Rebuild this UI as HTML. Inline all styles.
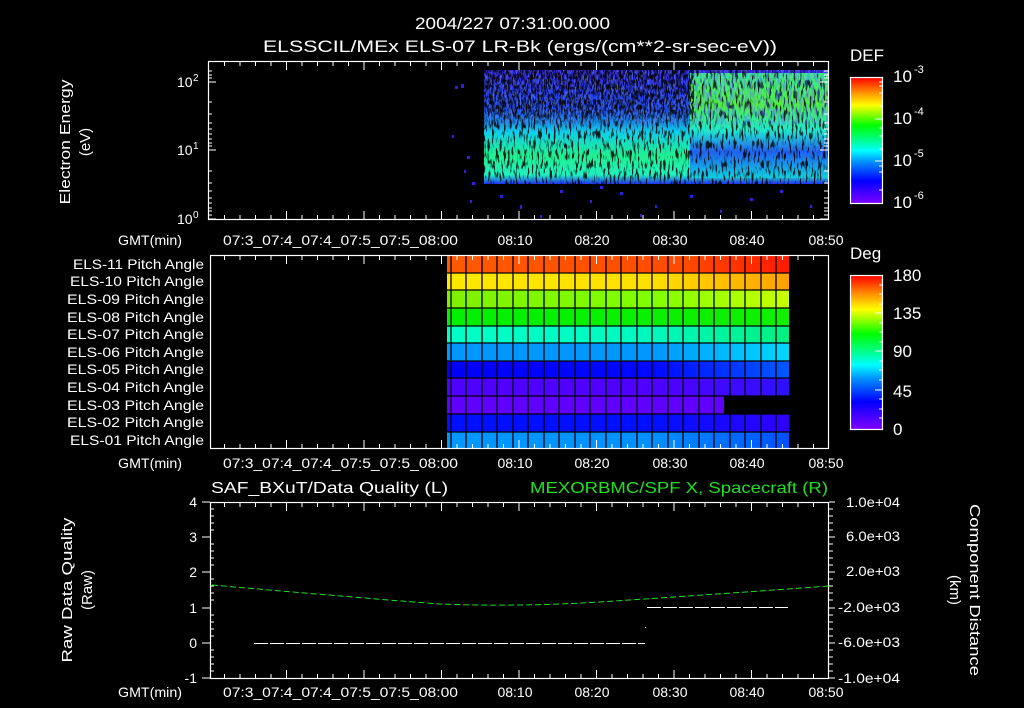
<!DOCTYPE html>
<html><head><meta charset="utf-8"><style>
html,body{margin:0;padding:0;background:#000;}
svg{display:block}
text{font-family:"Liberation Sans",sans-serif;fill:#fff;}
</style></head><body>
<svg width="1024" height="708" viewBox="0 0 1024 708" xmlns="http://www.w3.org/2000/svg">
<defs>
<filter id="spk" x="0" y="0" width="100%" height="100%">
<feTurbulence type="fractalNoise" baseFrequency="0.5 0.1" numOctaves="2" seed="3"/>
<feColorMatrix type="matrix" values="0 0 0 0 0  0 0 0 0 0  0 0 0 0 0  0 0 0 -8 3.7"/>
</filter>
<filter id="spk3" x="0" y="0" width="100%" height="100%">
<feTurbulence type="fractalNoise" baseFrequency="0.6 0.2" numOctaves="2" seed="11"/>
<feColorMatrix type="matrix" values="0 0 0 0 0  0 0 0 0 0  0 0 0 0 0  0 0 0 -8 4.3"/>
</filter>
<filter id="spk2" x="0" y="0" width="100%" height="100%">
<feTurbulence type="fractalNoise" baseFrequency="0.5 0.12" numOctaves="2" seed="7"/>
<feColorMatrix type="matrix" values="0 0 0 0 0.1  0 0 0 0 0.2  0 0 0 0 1  0 0 0 -6 3.2"/>
</filter>
<linearGradient id="fadeY" x1="0" y1="0" x2="0" y2="1"><stop offset="0" stop-color="#fff"/><stop offset="0.7" stop-color="#fff"/><stop offset="1" stop-color="#fff" stop-opacity="0"/></linearGradient>
<mask id="m3"><rect x="484" y="70" width="210" height="58" fill="url(#fadeY)"/></mask>
<linearGradient id="defbar" x1="0" y1="1" x2="0" y2="0">
<stop offset="0" stop-color="#8000ff"/><stop offset="0.18" stop-color="#0000ff"/><stop offset="0.33" stop-color="#0090ff"/><stop offset="0.42" stop-color="#00ffff"/><stop offset="0.5" stop-color="#00ff90"/><stop offset="0.62" stop-color="#00ff00"/><stop offset="0.78" stop-color="#ffff00"/><stop offset="0.88" stop-color="#ff9000"/><stop offset="1" stop-color="#ff0000"/>
</linearGradient>
<linearGradient id="g11" x1="0" x2="1"><stop offset="0" stop-color="#ff5a00"/><stop offset="0.7" stop-color="#ff4a00"/><stop offset="1" stop-color="#ff1a00"/></linearGradient>
<linearGradient id="g10" x1="0" x2="1"><stop offset="0" stop-color="#ffe800"/><stop offset="0.6" stop-color="#ffe000"/><stop offset="1" stop-color="#ffa000"/></linearGradient>
<linearGradient id="g09" x1="0" x2="1"><stop offset="0" stop-color="#80f000"/><stop offset="0.6" stop-color="#80ff00"/><stop offset="1" stop-color="#c8ff00"/></linearGradient>
<linearGradient id="g08" x1="0" x2="1"><stop offset="0" stop-color="#00f000"/><stop offset="1" stop-color="#10f000"/></linearGradient>
<linearGradient id="g07" x1="0" x2="1"><stop offset="0" stop-color="#00ffc8"/><stop offset="0.6" stop-color="#00f8c0"/><stop offset="1" stop-color="#00f080"/></linearGradient>
<linearGradient id="g06" x1="0" x2="1"><stop offset="0" stop-color="#0098ff"/><stop offset="0.6" stop-color="#0098ff"/><stop offset="1" stop-color="#00d8ff"/></linearGradient>
<linearGradient id="g05" x1="0" x2="1"><stop offset="0" stop-color="#0000f8"/><stop offset="0.6" stop-color="#0008ff"/><stop offset="1" stop-color="#0058ff"/></linearGradient>
<linearGradient id="g04" x1="0" x2="1"><stop offset="0" stop-color="#5000ff"/><stop offset="0.6" stop-color="#5000ff"/><stop offset="1" stop-color="#3010ff"/></linearGradient>
<linearGradient id="g02" x1="0" x2="1"><stop offset="0" stop-color="#0010ff"/><stop offset="0.6" stop-color="#0010ff"/><stop offset="1" stop-color="#3000ff"/></linearGradient>
<linearGradient id="g01" x1="0" x2="1"><stop offset="0" stop-color="#0098ff"/><stop offset="0.6" stop-color="#0090ff"/><stop offset="1" stop-color="#0050ff"/></linearGradient>
<linearGradient id="spV" x1="0" y1="0" x2="0" y2="1">
<stop offset="0" stop-color="#3020d8"/><stop offset="0.35" stop-color="#2050f0"/><stop offset="0.55" stop-color="#10d0e8"/><stop offset="0.75" stop-color="#20f090"/><stop offset="0.92" stop-color="#20f0c0"/><stop offset="1" stop-color="#2030f0"/>
</linearGradient>
<linearGradient id="spR" x1="0" y1="0" x2="0" y2="1">
<stop offset="0" stop-color="#40e890"/><stop offset="0.3" stop-color="#50f040"/><stop offset="0.55" stop-color="#20e8d0"/><stop offset="0.75" stop-color="#2060f0"/><stop offset="1" stop-color="#10d0e0"/>
</linearGradient>
</defs>

<!-- titles -->
<text x="415" y="29" font-size="17" textLength="195" lengthAdjust="spacingAndGlyphs">2004/227 07:31:00.000</text>
<text x="263" y="52" font-size="17" textLength="514" lengthAdjust="spacingAndGlyphs">ELSSCIL/MEx ELS-07 LR-Bk  (ergs/(cm**2-sr-sec-eV))</text>
<text x="850" y="61" font-size="17">DEF</text>

<!-- top spectrogram -->
<g>
<rect x="484" y="70" width="344" height="114" fill="url(#spV)"/>
<rect x="690" y="73" width="138" height="105" fill="url(#spR)"/>
<rect x="484" y="70" width="344" height="114" fill="#000" filter="url(#spk)" opacity="0.85"/>
<rect x="484" y="70" width="344" height="55" filter="url(#spk2)" opacity="0.5"/>
<g mask="url(#m3)"><rect x="484" y="70" width="210" height="58" fill="#000" filter="url(#spk3)" opacity="0.8"/></g>
<g fill="#3020e0">
<rect x="455" y="86" width="3" height="3"/><rect x="461" y="84" width="3" height="4"/><rect x="452" y="135" width="2" height="3"/>
<rect x="467" y="156" width="3" height="3"/><rect x="464" y="170" width="2" height="3"/><rect x="472" y="182" width="3" height="3"/>
<rect x="470" y="200" width="2" height="3"/><rect x="500" y="195" width="3" height="3"/><rect x="520" y="205" width="2" height="4"/>
<rect x="560" y="190" width="3" height="3"/><rect x="590" y="200" width="2" height="3"/><rect x="620" y="192" width="3" height="3"/>
<rect x="655" y="205" width="2" height="3"/><rect x="690" y="195" width="3" height="3"/><rect x="720" y="210" width="2" height="3"/>
<rect x="750" y="198" width="3" height="3"/><rect x="780" y="190" width="3" height="3"/><rect x="810" y="205" width="2" height="3"/>
<rect x="540" y="215" width="2" height="3"/><rect x="640" y="214" width="2" height="3"/><rect x="600" y="186" width="3" height="3"/>
</g>
</g>
<!-- top panel frame -->
<rect x="208.5" y="61.5" width="620" height="158" fill="none" stroke="#fff" stroke-width="1.2"/>
<g stroke="#fff" stroke-width="1">
<path d="M208 82h8M208 150h8M208 219h8M828 82h-8M828 150h-8M828 219h-8"/>
<path d="M208 71h4M208 75h4M208 78h4M208 102h4M208 114h4M208 123h4M208 129h4M208 134h4M208 139h4M208 143h4M208 146h4M208 171h4M208 183h4M208 191h4M208 198h4M208 203h4M208 208h4M208 211h4M208 215h4"/>
<path d="M828 71h-4M828 75h-4M828 78h-4M828 102h-4M828 114h-4M828 123h-4M828 129h-4M828 134h-4M828 139h-4M828 143h-4M828 146h-4M828 171h-4M828 183h-4M828 191h-4M828 198h-4M828 203h-4M828 208h-4M828 211h-4M828 215h-4"/>
</g>
<text font-size="15" text-anchor="middle" textLength="125" lengthAdjust="spacingAndGlyphs" transform="translate(70,142) rotate(-90)">Electron Energy</text>
<text font-size="15" text-anchor="middle" transform="translate(90,142) rotate(-90)">(eV)</text>
<text x="177" y="87" font-size="14">10</text><text x="193" y="81" font-size="10">2</text>
<text x="177" y="155" font-size="14">10</text><text x="193" y="149" font-size="10">1</text>
<text x="177" y="224" font-size="14">10</text><text x="193" y="218" font-size="10">0</text>

<!-- DEF colorbar -->
<rect x="850.5" y="77.5" width="32" height="126" fill="url(#defbar)" stroke="#fff" stroke-width="1.2"/>
<g stroke="#fff"><path d="M883 82h-4M883 86h-4M883 93h-4M883 106h-4M883 119h-8M883 128h-4M883 136h-4M883 149h-4M883 161h-8M883 166h-4M883 172h-4M883 190h-4"/></g>
<text x="893" y="82" font-size="17">10</text><text x="914" y="73" font-size="11">-3</text>
<text x="893" y="124" font-size="17">10</text><text x="914" y="115" font-size="11">-4</text>
<text x="893" y="166" font-size="17">10</text><text x="914" y="157" font-size="11">-5</text>
<text x="893" y="208" font-size="17">10</text><text x="914" y="199" font-size="11">-6</text>

<!-- x labels -->
<g font-size="14">
<text x="118" y="245" textLength="64" lengthAdjust="spacingAndGlyphs">GMT(min)</text>
<text x="223" y="245" textLength="235" lengthAdjust="spacingAndGlyphs">07:3_07:4_07:4_07:5_07:5_08:00</text>
<text x="515" y="245" text-anchor="middle">08:10</text><text x="592" y="245" text-anchor="middle">08:20</text><text x="670" y="245" text-anchor="middle">08:30</text><text x="747" y="245" text-anchor="middle">08:40</text><text x="826" y="245" text-anchor="middle">08:50</text>
<text x="118" y="468" textLength="64" lengthAdjust="spacingAndGlyphs">GMT(min)</text>
<text x="223" y="468" textLength="235" lengthAdjust="spacingAndGlyphs">07:3_07:4_07:4_07:5_07:5_08:00</text>
<text x="515" y="468" text-anchor="middle">08:10</text><text x="592" y="468" text-anchor="middle">08:20</text><text x="670" y="468" text-anchor="middle">08:30</text><text x="747" y="468" text-anchor="middle">08:40</text><text x="826" y="468" text-anchor="middle">08:50</text>
<text x="118" y="697" textLength="64" lengthAdjust="spacingAndGlyphs">GMT(min)</text>
<text x="223" y="697" textLength="235" lengthAdjust="spacingAndGlyphs">07:3_07:4_07:4_07:5_07:5_08:00</text>
<text x="515" y="697" text-anchor="middle">08:10</text><text x="592" y="697" text-anchor="middle">08:20</text><text x="670" y="697" text-anchor="middle">08:30</text><text x="747" y="697" text-anchor="middle">08:40</text><text x="826" y="697" text-anchor="middle">08:50</text>
</g>

<!-- middle panel -->
<g>
<rect x="447" y="256" width="342" height="17" fill="url(#g11)"/>
<rect x="447" y="273" width="342" height="17" fill="url(#g10)"/>
<rect x="447" y="290" width="342" height="18" fill="url(#g09)"/>
<rect x="447" y="308" width="342" height="18" fill="url(#g08)"/>
<rect x="447" y="326" width="342" height="17" fill="url(#g07)"/>
<rect x="447" y="343" width="342" height="18" fill="url(#g06)"/>
<rect x="447" y="361" width="342" height="17" fill="url(#g05)"/>
<rect x="447" y="378" width="342" height="18" fill="url(#g04)"/>
<rect x="447" y="396" width="277" height="18" fill="#6000ff"/>
<rect x="447" y="414" width="342" height="18" fill="url(#g02)"/>
<rect x="447" y="432" width="342" height="17" fill="url(#g01)"/>
<g stroke="#000" stroke-width="1.3">
<path d="M447 273h342M447 290h342M447 308h342M447 326h342M447 343h342M447 361h342M447 378h342M447 396h342M447 414h342M447 432h342"/>
<path d="M451 256v193M466 256v193M482 256v193M497 256v193M513 256v193M528 256v193M544 256v193M559 256v193M575 256v193M590 256v193M606 256v193M621 256v193M637 256v193M652 256v193M668 256v193M683 256v193M699 256v193M714 256v193M730 256v193M745 256v193M761 256v193M776 256v193"/>
</g>
</g>
<rect x="210.5" y="255.5" width="618" height="193" fill="none" stroke="#fff" stroke-width="1.2"/>
<g font-size="14">
<text x="73" y="269" textLength="131" lengthAdjust="spacingAndGlyphs">ELS-11 Pitch Angle</text>
<text x="70" y="286" textLength="134" lengthAdjust="spacingAndGlyphs">ELS-10 Pitch Angle</text>
<text x="67" y="304" textLength="137" lengthAdjust="spacingAndGlyphs">ELS-09 Pitch Angle</text>
<text x="67" y="322" textLength="137" lengthAdjust="spacingAndGlyphs">ELS-08 Pitch Angle</text>
<text x="67" y="339" textLength="137" lengthAdjust="spacingAndGlyphs">ELS-07 Pitch Angle</text>
<text x="67" y="357" textLength="137" lengthAdjust="spacingAndGlyphs">ELS-06 Pitch Angle</text>
<text x="67" y="374" textLength="137" lengthAdjust="spacingAndGlyphs">ELS-05 Pitch Angle</text>
<text x="67" y="392" textLength="137" lengthAdjust="spacingAndGlyphs">ELS-04 Pitch Angle</text>
<text x="67" y="410" textLength="137" lengthAdjust="spacingAndGlyphs">ELS-03 Pitch Angle</text>
<text x="67" y="427" textLength="137" lengthAdjust="spacingAndGlyphs">ELS-02 Pitch Angle</text>
<text x="70" y="445" textLength="134" lengthAdjust="spacingAndGlyphs">ELS-01 Pitch Angle</text>
</g>
<text x="850" y="259" font-size="17">Deg</text>
<rect x="850.5" y="275.5" width="32" height="154" fill="url(#defbar)" stroke="#fff" stroke-width="1.2"/>
<g stroke="#fff"><path d="M883 285h-4M883 294h-4M883 304h-4M883 313h-8M883 323h-4M883 332h-4M883 342h-4M883 351h-8M883 361h-4M883 370h-4M883 380h-4M883 390h-8M883 399h-4M883 409h-4M883 418h-4"/></g>
<g font-size="17"><text x="893" y="281">180</text><text x="893" y="319">135</text><text x="893" y="357">90</text><text x="893" y="397">45</text><text x="893" y="435">0</text></g>

<!-- bottom panel -->
<text x="211" y="493" font-size="16" textLength="237" lengthAdjust="spacingAndGlyphs">SAF_BXuT/Data Quality (L)</text>
<text x="530" y="493" font-size="16" textLength="298" lengthAdjust="spacingAndGlyphs" style="fill:#20e020">MEXORBMC/SPF X, Spacecraft (R)</text>
<rect x="210.5" y="502.5" width="618" height="176" fill="none" stroke="#fff" stroke-width="1.2"/>
<g stroke="#fff" stroke-width="1">
<path d="M210 502h-8M210 537h-8M210 572h-8M210 608h-8M210 643h-8M210 678h-8"/>
<path d="M210 509h4M210 516h4M210 523h4M210 530h4M210 544h4M210 551h4M210 558h4M210 565h4M210 579h4M210 586h4M210 593h4M210 600h4M210 615h4M210 622h4M210 629h4M210 636h4M210 650h4M210 657h4M210 664h4M210 671h4"/>
<path d="M829 502h6M829 537h6M829 572h6M829 608h6M829 643h6M829 678h6"/>
<path d="M829 509h4M829 516h4M829 523h4M829 530h4M829 544h4M829 551h4M829 558h4M829 565h4M829 579h4M829 586h4M829 593h4M829 600h4M829 615h4M829 622h4M829 629h4M829 636h4M829 650h4M829 657h4M829 664h4M829 671h4"/>
</g>
<g font-size="14" text-anchor="end"><text x="197" y="507">4</text><text x="197" y="542">3</text><text x="197" y="577">2</text><text x="197" y="613">1</text><text x="197" y="648">0</text><text x="197" y="683">-1</text></g>
<g font-size="14">
<text x="846" y="507" textLength="54" lengthAdjust="spacingAndGlyphs">1.0e+04</text>
<text x="846" y="541" textLength="54" lengthAdjust="spacingAndGlyphs">6.0e+03</text>
<text x="846" y="576" textLength="54" lengthAdjust="spacingAndGlyphs">2.0e+03</text>
<text x="838" y="612" textLength="62" lengthAdjust="spacingAndGlyphs">-2.0e+03</text>
<text x="838" y="647" textLength="62" lengthAdjust="spacingAndGlyphs">-6.0e+03</text>
<text x="838" y="683" textLength="62" lengthAdjust="spacingAndGlyphs">-1.0e+04</text>
</g>
<text font-size="15" text-anchor="middle" textLength="145" lengthAdjust="spacingAndGlyphs" transform="translate(72,590) rotate(-90)">Raw Data Quality</text>
<text font-size="15" text-anchor="middle" transform="translate(92,590) rotate(-90)">(Raw)</text>
<text font-size="15" text-anchor="middle" textLength="172" lengthAdjust="spacingAndGlyphs" transform="translate(970,590) rotate(90)">Component Distance</text>
<text font-size="15" text-anchor="middle" transform="translate(950,590) rotate(90)">(km)</text>
<path d="M254 643.5H645M647 607.5H788" stroke="#fff" stroke-width="1" stroke-dasharray="14 2"/>
<rect x="645" y="627" width="1" height="1" fill="#fff"/>
<path d="M212 585 Q360 598 440 604 Q520 607 600 602 Q720 594 829 586" fill="none" stroke="#20e020" stroke-width="1" stroke-dasharray="6 3"/>

<!-- time ticks (absolute coordinates) -->
<g stroke="#fff" stroke-width="1" fill="none">
<path d="M224.5 62v4m15.5 -4v4m15.5 -4v4m15.5 -4v4m15.5 -4v8m15.5 -8v4m15.5 -4v4m15.5 -4v4m15.5 -4v4m15.5 -4v8m15.5 -8v4m15.5 -4v4m15.5 -4v4m15.5 -4v4m15.5 -4v8m15.5 -8v4m15.5 -4v4m15.5 -4v4m15.5 -4v4m15.5 -4v8m15.5 -8v4m15.5 -4v4m15.5 -4v4m15.5 -4v4m15.5 -4v8m15.5 -8v4m15.5 -4v4m15.5 -4v4m15.5 -4v4m15.5 -4v8m15.5 -8v4m15.5 -4v4m15.5 -4v4m15.5 -4v4m15.5 -4v8m15.5 -8v4m15.5 -4v4m15.5 -4v4m15.5 -4v4"/>
<path d="M224.5 219v-4m15.5 4v-4m15.5 4v-4m15.5 4v-4m15.5 4v-8m15.5 8v-4m15.5 4v-4m15.5 4v-4m15.5 4v-4m15.5 4v-8m15.5 8v-4m15.5 4v-4m15.5 4v-4m15.5 4v-4m15.5 4v-8m15.5 8v-4m15.5 4v-4m15.5 4v-4m15.5 4v-4m15.5 4v-8m15.5 8v-4m15.5 4v-4m15.5 4v-4m15.5 4v-4m15.5 4v-8m15.5 8v-4m15.5 4v-4m15.5 4v-4m15.5 4v-4m15.5 4v-8m15.5 8v-4m15.5 4v-4m15.5 4v-4m15.5 4v-4m15.5 4v-8m15.5 8v-4m15.5 4v-4m15.5 4v-4m15.5 4v-4"/>
<path d="M224.5 256v4m15.5 -4v4m15.5 -4v4m15.5 -4v4m15.5 -4v8m15.5 -8v4m15.5 -4v4m15.5 -4v4m15.5 -4v4m15.5 -4v8m15.5 -8v4m15.5 -4v4m15.5 -4v4m15.5 -4v4m15.5 -4v8m15.5 -8v4m15.5 -4v4m15.5 -4v4m15.5 -4v4m15.5 -4v8m15.5 -8v4m15.5 -4v4m15.5 -4v4m15.5 -4v4m15.5 -4v8m15.5 -8v4m15.5 -4v4m15.5 -4v4m15.5 -4v4m15.5 -4v8m15.5 -8v4m15.5 -4v4m15.5 -4v4m15.5 -4v4m15.5 -4v8m15.5 -8v4m15.5 -4v4m15.5 -4v4m15.5 -4v4"/>
<path d="M224.5 448v-4m15.5 4v-4m15.5 4v-4m15.5 4v-4m15.5 4v-8m15.5 8v-4m15.5 4v-4m15.5 4v-4m15.5 4v-4m15.5 4v-8m15.5 8v-4m15.5 4v-4m15.5 4v-4m15.5 4v-4m15.5 4v-8m15.5 8v-4m15.5 4v-4m15.5 4v-4m15.5 4v-4m15.5 4v-8m15.5 8v-4m15.5 4v-4m15.5 4v-4m15.5 4v-4m15.5 4v-8m15.5 8v-4m15.5 4v-4m15.5 4v-4m15.5 4v-4m15.5 4v-8m15.5 8v-4m15.5 4v-4m15.5 4v-4m15.5 4v-4m15.5 4v-8m15.5 8v-4m15.5 4v-4m15.5 4v-4m15.5 4v-4"/>
<path d="M224.5 503v4m15.5 -4v4m15.5 -4v4m15.5 -4v4m15.5 -4v8m15.5 -8v4m15.5 -4v4m15.5 -4v4m15.5 -4v4m15.5 -4v8m15.5 -8v4m15.5 -4v4m15.5 -4v4m15.5 -4v4m15.5 -4v8m15.5 -8v4m15.5 -4v4m15.5 -4v4m15.5 -4v4m15.5 -4v8m15.5 -8v4m15.5 -4v4m15.5 -4v4m15.5 -4v4m15.5 -4v8m15.5 -8v4m15.5 -4v4m15.5 -4v4m15.5 -4v4m15.5 -4v8m15.5 -8v4m15.5 -4v4m15.5 -4v4m15.5 -4v4m15.5 -4v8m15.5 -8v4m15.5 -4v4m15.5 -4v4m15.5 -4v4"/>
<path d="M224.5 678v-4m15.5 4v-4m15.5 4v-4m15.5 4v-4m15.5 4v-8m15.5 8v-4m15.5 4v-4m15.5 4v-4m15.5 4v-4m15.5 4v-8m15.5 8v-4m15.5 4v-4m15.5 4v-4m15.5 4v-4m15.5 4v-8m15.5 8v-4m15.5 4v-4m15.5 4v-4m15.5 4v-4m15.5 4v-8m15.5 8v-4m15.5 4v-4m15.5 4v-4m15.5 4v-4m15.5 4v-8m15.5 8v-4m15.5 4v-4m15.5 4v-4m15.5 4v-4m15.5 4v-8m15.5 8v-4m15.5 4v-4m15.5 4v-4m15.5 4v-4m15.5 4v-8m15.5 8v-4m15.5 4v-4m15.5 4v-4m15.5 4v-4"/>
</g>
</svg>
</body></html>
